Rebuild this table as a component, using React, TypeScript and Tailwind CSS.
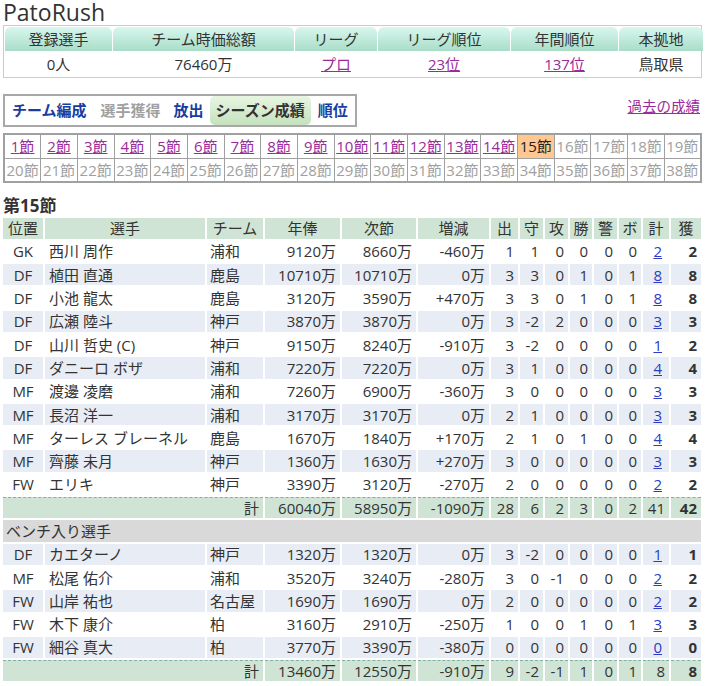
import React from 'react';

type Row = [string, string, string, string, string, string, string, string, string, string, string, string, string, string];

const starters: Row[] = [
  ['GK', '西川 周作', '浦和', '9120万', '8660万', '-460万', '1', '1', '0', '0', '0', '0', '2', '2'],
  ['DF', '植田 直通', '鹿島', '10710万', '10710万', '0万', '3', '3', '0', '1', '0', '1', '8', '8'],
  ['DF', '小池 龍太', '鹿島', '3120万', '3590万', '+470万', '3', '3', '0', '1', '0', '1', '8', '8'],
  ['DF', '広瀬 陸斗', '神戸', '3870万', '3870万', '0万', '3', '-2', '2', '0', '0', '0', '3', '3'],
  ['DF', '山川 哲史 (C)', '神戸', '9150万', '8240万', '-910万', '3', '-2', '0', '0', '0', '0', '1', '2'],
  ['DF', 'ダニーロ ボザ', '浦和', '7220万', '7220万', '0万', '3', '1', '0', '0', '0', '0', '4', '4'],
  ['MF', '渡邊 凌磨', '浦和', '7260万', '6900万', '-360万', '3', '0', '0', '0', '0', '0', '3', '3'],
  ['MF', '長沼 洋一', '浦和', '3170万', '3170万', '0万', '2', '1', '0', '0', '0', '0', '3', '3'],
  ['MF', 'ターレス ブレーネル', '鹿島', '1670万', '1840万', '+170万', '2', '1', '0', '1', '0', '0', '4', '4'],
  ['MF', '齊藤 未月', '神戸', '1360万', '1630万', '+270万', '3', '0', '0', '0', '0', '0', '3', '3'],
  ['FW', 'エリキ', '神戸', '3390万', '3120万', '-270万', '2', '0', '0', '0', '0', '0', '2', '2'],
];

const bench: Row[] = [
  ['DF', 'カエターノ', '神戸', '1320万', '1320万', '0万', '3', '-2', '0', '0', '0', '0', '1', '1'],
  ['MF', '松尾 佑介', '浦和', '3520万', '3240万', '-280万', '3', '0', '-1', '0', '0', '0', '2', '2'],
  ['FW', '山岸 祐也', '名古屋', '1690万', '1690万', '0万', '2', '0', '0', '0', '0', '0', '2', '2'],
  ['FW', '木下 康介', '柏', '3160万', '2910万', '-250万', '1', '0', '0', '1', '0', '1', '3', '3'],
  ['FW', '細谷 真大', '柏', '3770万', '3390万', '-380万', '0', '0', '0', '0', '0', '0', '0', '0'],
];

const widths = [40, 160, 56, 75, 74, 71, 27, 23, 23, 22, 23, 22, 26, 30];
const heads = ['位置', '選手', 'チーム', '年俸', '次節', '増減', '出', '守', '攻', '勝', '警', 'ボ', '計', '獲'];

const cell = 'h-[21.3px] p-0 leading-[20px] whitespace-nowrap';

function PlayerRow({ r, shade }: { r: Row; shade: boolean }) {
  const bg = shade ? 'bg-[#e8ecf4]' : 'bg-white';
  return (
    <tr className={bg}>
      <td className={`${cell} text-center`}>{r[0]}</td>
      <td className={`${cell} pl-[4px]`}>{r[1]}</td>
      <td className={`${cell} pl-[3px]`}>{r[2]}</td>
      {r.slice(3, 12).map((v, i) => (
        <td key={i} className={`${cell} text-right pr-[4px]`}>{v}</td>
      ))}
      <td className={`${cell} text-right pr-[7px]`}>
        <span className="text-[#2b3cc7] underline">{r[12]}</span>
      </td>
      <td className={`${cell} text-right pr-[4px] font-bold`}>{r[13]}</td>
    </tr>
  );
}

function TotalRow({ v }: { v: string[] }) {
  const c = `${cell} bg-[#d0e4d5] border-t border-dashed border-t-[#7fb2a2]`;
  return (
    <tr>
      <td colSpan={3} className={`${c} text-right pr-[4px]`}>計</td>
      {v.slice(0, v.length - 1).map((x, i) => (
        <td key={i} className={`${c} text-right pr-[4px]`}>{x}</td>
      ))}
      <td className={`${c} text-right pr-[4px] font-bold`}>{v[v.length - 1]}</td>
    </tr>
  );
}

export default function App() {
  const info = [
    { h: '登録選手', v: '0人', w: 107 },
    { h: 'チーム時価総額', v: '76460万', w: 181 },
    { h: 'リーグ', v: 'プロ', w: 82, link: true },
    { h: 'リーグ順位', v: '23位', w: 132, link: true },
    { h: '年間順位', v: '137位', w: 107, link: true },
    { h: '本拠地', v: '鳥取県', w: 84 },
  ];
  const rounds1 = Array.from({ length: 19 }, (_, i) => i + 1);
  const rounds2 = Array.from({ length: 19 }, (_, i) => i + 20);

  return (
    <div className="w-[705px] h-[686px] overflow-hidden bg-white text-[#333] text-[15px] font-['Open_Sans','Noto_Sans_CJK_JP',sans-serif]">
      <div className="pl-[3px] pr-[3px]">
        <h1 className="text-[23px] leading-[25px] h-[25px]">PatoRush</h1>

        <div className="border border-[#a8dccb] w-[699px] p-0">
          <table className="border-separate border-spacing-[1px] table-fixed w-full">
            <colgroup>
              {info.map((c) => (
                <col key={c.h} style={{ width: c.w }} />
              ))}
            </colgroup>
            <tbody>
              <tr>
                {info.map((c) => (
                  <th
                    key={c.h}
                    className="h-[24px] p-0 font-normal leading-[22px] rounded-t-[6px] bg-gradient-to-b from-[#d8f7ef] to-[#a9ddc8] text-[#333]"
                  >
                    {c.h}
                  </th>
                ))}
              </tr>
              <tr>
                {info.map((c) => (
                  <td key={c.h} className="h-[24px] p-0 text-center leading-[22px]">
                    {c.link ? <span className="text-[#9b2a9b] underline">{c.v}</span> : c.v}
                  </td>
                ))}
              </tr>
            </tbody>
          </table>
        </div>

        <div className="flex justify-between items-start mt-[16px]">
          <div className="flex items-center h-[33px] w-[354px] border-2 border-[#a8a8a8] pl-[6px] font-bold">
            <span className="text-[#1a3c9e] px-[1px]">チーム編成</span>
            <span className="text-[#a0a0a0] ml-[13px]">選手獲得</span>
            <span className="text-[#1a3c9e] ml-[13px]">放出</span>
            <span className="ml-[6px] px-[6px] h-[29px] leading-[29px] rounded-[5px] bg-gradient-to-b from-[#e8f5e2] to-[#c4e2bd] text-[#333]">
              シーズン成績
            </span>
            <span className="text-[#1a3c9e] ml-[7px]">順位</span>
          </div>
          <span className="text-[#9b2a9b] underline mt-[2px] mr-[2px] text-[14.5px]">過去の成績</span>
        </div>

        <table className="mt-[6px] w-[699px] table-fixed border-collapse border-2 border-[#a0a0a0]">
          <tbody>
            <tr>
              {rounds1.map((n) => (
                <td
                  key={n}
                  className={`h-[24px] p-0 text-center border border-[#a0a0a0] leading-[22px] ${
                    n === 15 ? 'bg-[#ffc890] text-[#222]' : ''
                  }`}
                >
                  {n < 15 ? (
                    <span className="text-[#9b2a9b] underline">{n}節</span>
                  ) : n === 15 ? (
                    <span>{n}節</span>
                  ) : (
                    <span className="text-[#a0a0a0]">{n}節</span>
                  )}
                </td>
              ))}
            </tr>
            <tr>
              {rounds2.map((n) => (
                <td key={n} className="h-[23px] p-0 text-center border border-[#a0a0a0] leading-[22px] text-[#a0a0a0]">
                  {n}節
                </td>
              ))}
            </tr>
          </tbody>
        </table>

        <h2 className="font-bold text-[17px] leading-[20px] mt-[13px] h-[20px]">第15節</h2>
      </div>

      <table className="ml-[1px] border-separate border-spacing-[2px] table-fixed w-[702px]">
        <colgroup>
          {widths.map((w, i) => (
            <col key={i} style={{ width: w }} />
          ))}
        </colgroup>
        <tbody>
          <tr>
            {heads.map((h) => (
              <th key={h} className={`${cell} font-normal text-center bg-[#d0e4d5]`}>
                {h}
              </th>
            ))}
          </tr>
          {starters.map((r, i) => (
            <PlayerRow key={r[1]} r={r} shade={i % 2 === 1} />
          ))}
          <TotalRow v={['60040万', '58950万', '-1090万', '28', '6', '2', '3', '0', '2', '41', '42']} />
          <tr>
            <td colSpan={14} className={`${cell} bg-[#d9d9d9] pl-[3px]`}>
              ベンチ入り選手
            </td>
          </tr>
          {bench.map((r, i) => (
            <PlayerRow key={r[1]} r={r} shade={i % 2 === 0} />
          ))}
          <TotalRow v={['13460万', '12550万', '-910万', '9', '-2', '-1', '1', '0', '1', '8', '8']} />
        </tbody>
      </table>
    </div>
  );
}
